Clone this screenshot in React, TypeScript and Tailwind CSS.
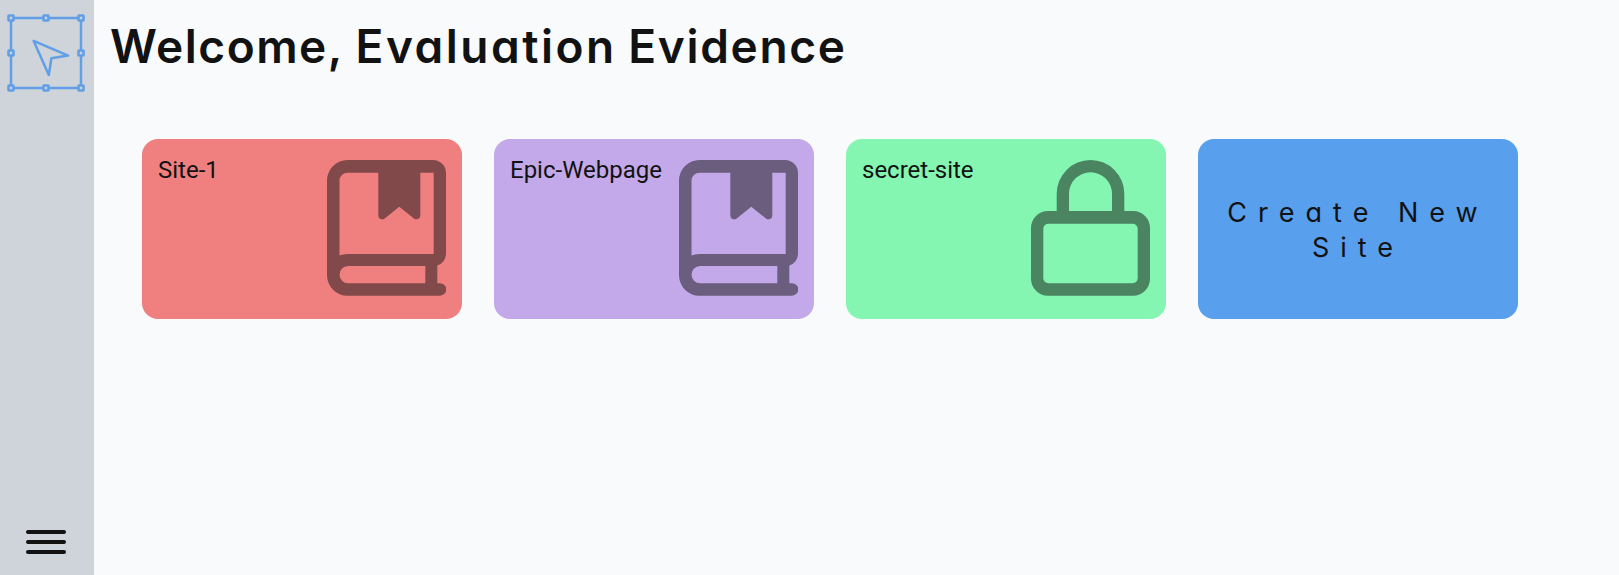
import React from "react";

const handles: [number, number][] = [
  [11, 18], [46, 18], [81, 18],
  [11, 53], [81, 53],
  [11, 88], [46, 88], [81, 88],
];

function Logo() {
  return (
    <svg className="block h-[100px] w-[94px]" viewBox="0 0 94 100" fill="none" stroke="#619fe6" strokeWidth="2.5">
      <rect x="11" y="18" width="70" height="70" />
      {handles.map(([x, y]) => (
        <rect key={`${x}-${y}`} x={x - 2.5} y={y - 2.5} width="5" height="5" rx="0.4" fill="#ced4da" strokeWidth="2.6" />
      ))}
      <path d="M33.6 40.8 L68.2 55.6 L51.4 58.2 L48.8 75 Z" strokeLinejoin="round" />
    </svg>
  );
}

function BookIcon() {
  return (
    <svg className="h-[136px] w-[119px] shrink-0" viewBox="0 0 119 136" fill="#121212" fillOpacity="0.5" fillRule="evenodd">
      <path d="M20.5 0H106a13 13 0 0 1 13 13V94a12.5 12.5 0 0 1-8.7 11.5V123.2H113a6.2 6.2 0 0 1 0 12.5H20.5A20.5 20.5 0 0 1 0 115.2V20.5A20.5 20.5 0 0 1 20.5 0ZM20.5 12.7a8 8 0 0 0-8 8V95.5Q16 94 20.5 94H106.7V12.7H93.3V55.4a3.9 3.9 0 0 1-6.4 3L72.3 46.7 57.7 58.4a3.9 3.9 0 0 1-6.4-3V12.7ZM21.1 106a8.6 8.6 0 0 0 0 17.2H98.3V106Z" />
    </svg>
  );
}

function LockIcon() {
  return (
    <svg className="h-[136px] w-[119px] shrink-0" viewBox="0 0 119 136" fill="#121212" fillOpacity="0.5" fillRule="evenodd">
      <path d="M25.7 51V33.8a33.8 33.8 0 0 1 67.6 0V51H102a17 17 0 0 1 17 17V118.7a17 17 0 0 1-17 17H17a17 17 0 0 1-17-17V68a17 17 0 0 1 17-17ZM38 51H81V33.8a21.5 21.5 0 0 0-43 0ZM17.3 63.7a5 5 0 0 0-5 5V118.3a5 5 0 0 0 5 5H101.7a5 5 0 0 0 5-5V68.7a5 5 0 0 0-5-5Z" />
    </svg>
  );
}

const sites = [
  { name: "Site-1", color: "bg-[#f08080]", locked: false },
  { name: "Epic-Webpage", color: "bg-[#c3a9e9]", locked: false },
  { name: "secret-site", color: "bg-[#84f6b1]", locked: true },
];

export default function App() {
  return (
    <div className="flex h-screen overflow-hidden bg-[#f8fafc] text-[#121212]">
      <aside className="flex w-[94px] shrink-0 flex-col justify-between bg-[#ced4da]">
        <Logo />
        <button aria-label="Menu" className="mb-[21px] ml-[26px] flex w-10 flex-col gap-1.5">
          <span className="h-1 w-full rounded-full bg-[#121212]" />
          <span className="h-1 w-full rounded-full bg-[#121212]" />
          <span className="h-1 w-full rounded-full bg-[#121212]" />
        </button>
      </aside>
      <main className="flex-1 pl-4 pt-4">
        <h1 className="h-[60px] whitespace-nowrap font-['Inter',sans-serif] text-[46px] font-semibold leading-[60px] [font-feature-settings:'cv11']">
          <span className="tracking-[1.5px]">Welcome,</span>{" "}
          <span className="tracking-[2.5px]">Evaluation</span>{" "}
          <span className="tracking-[1.7px]">Evidence</span>
        </h1>
        <div className="ml-8 mt-[63px] flex gap-8">
          {sites.map((site) => (
            <div key={site.name} className={`flex h-[180px] w-[320px] justify-between rounded-2xl px-4 ${site.color}`}>
              <span className="mt-[17px] whitespace-nowrap font-['Roboto',sans-serif] text-2xl leading-7">{site.name}</span>
              <div className="mt-[21px]">{site.locked ? <LockIcon /> : <BookIcon />}</div>
            </div>
          ))}
          <button className="flex h-[180px] w-[320px] items-center justify-center rounded-2xl bg-[#589fee] px-4 pt-0.5 text-center font-['Inter',sans-serif] text-[27px] leading-[35px] tracking-[11px] [font-feature-settings:'cv11']">
            Create New Site
          </button>
        </div>
      </main>
    </div>
  );
}
